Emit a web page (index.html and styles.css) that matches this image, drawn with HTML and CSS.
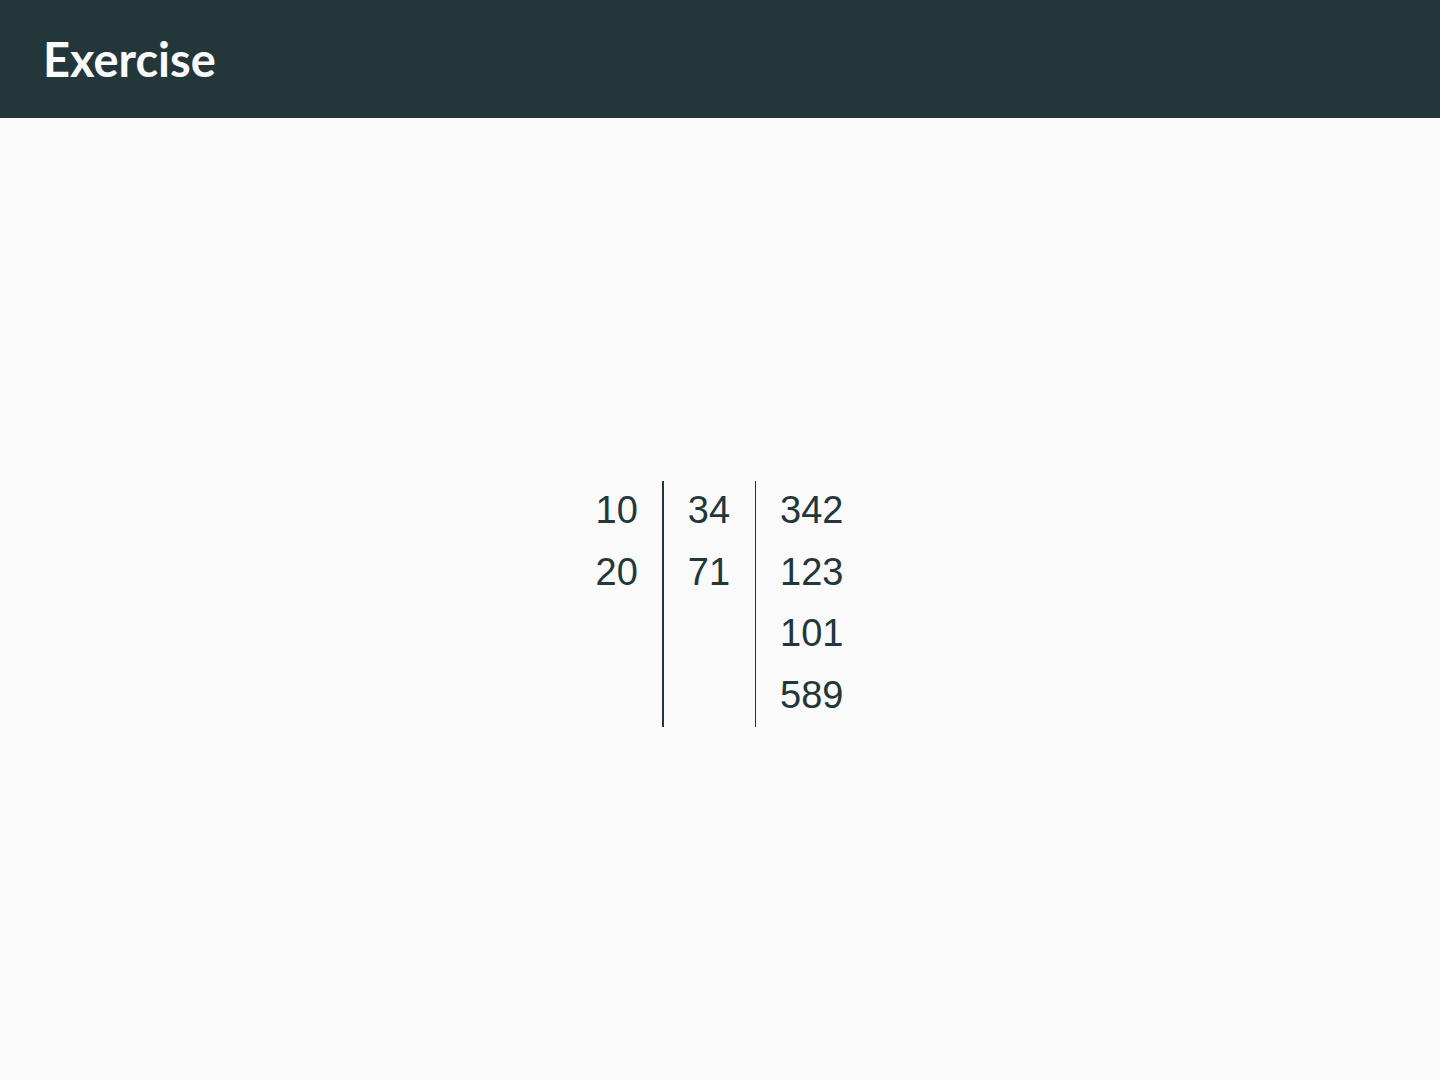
FILE: index.html
```html
<!DOCTYPE html>
<html>
<head>
<meta charset="utf-8">
<link rel="stylesheet" href="styles.css">
</head>
<body>
<header class="frametitle">Exercise</header>
<main class="content">
  <table class="stem">
    <tr><td class="c1">10</td><td class="c2">34</td><td class="c3">342</td></tr>
    <tr><td class="c1">20</td><td class="c2">71</td><td class="c3">123</td></tr>
    <tr><td class="c1"></td><td class="c2"></td><td class="c3">101</td></tr>
    <tr><td class="c1"></td><td class="c2"></td><td class="c3">589</td></tr>
  </table>
</main>
</body>
</html>
```
FILE: styles.css
```css
html, body {
  margin: 0;
  padding: 0;
  background: #fafafa;
}
body {
  width: 1440px;
  height: 1080px;
  display: flex;
  flex-direction: column;
  color: #23373b;
}
.frametitle {
  height: 118px;
  background: #23373b;
  color: #fafafa;
  font-family: Lato, "Open Sans", sans-serif;
  font-weight: 700;
  font-size: 47px;
  line-height: 118px;
  padding-left: 43px;
  box-sizing: border-box;
}
.content {
  flex: 1;
  display: flex;
  align-items: center;
  justify-content: center;
  padding-top: 10px;
  box-sizing: border-box;
}
.stem {
  border-collapse: collapse;
  font-family: "Liberation Sans", Arial, sans-serif;
  font-size: 38px;
  color: #23373b;
}
.stem td {
  height: 59.5px;
  padding: 0 25px 2px 24px;
  line-height: 59.5px;
  vertical-align: middle;
}
.c1 {
  text-align: right;
  border-right: 2px solid #23373b;
  padding-right: 24px !important;
}
.c2 {
  text-align: right;
  border-right: 1px solid #23373b;
  padding-right: 25px !important;
  min-width: 42px;
}
.c3 {
  text-align: left;
  padding-right: 25px !important;
}
```
